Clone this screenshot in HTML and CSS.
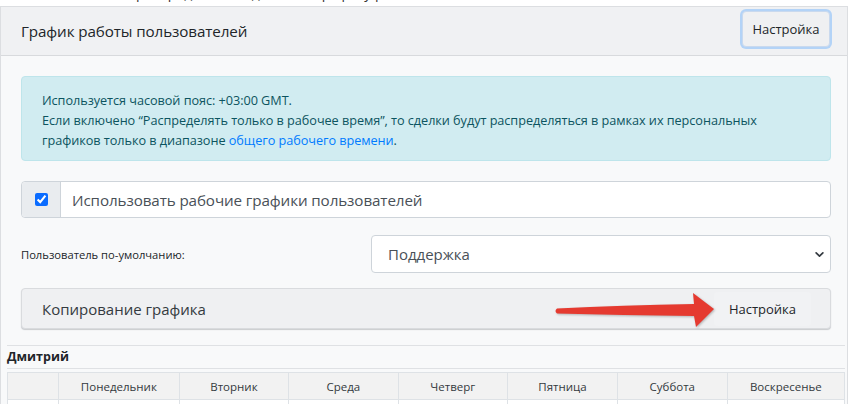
FILE: index.html
```html
<!DOCTYPE html>
<html lang="ru">
<head>
  <meta charset="UTF-8" />
  <meta name="viewport" content="width=device-width, initial-scale=1.0"/>
  <title>График работы пользователей</title>
  <link rel="stylesheet" href="styles.css">
</head>
<body>
  <div class="cut"><span>распределения сделок по графику работы</span></div>

  <div class="card">
    <div class="card-header">
      <span class="card-title">График работы пользователей</span>
      <button class="btn btn-focus">Настройка</button>
    </div>

    <div class="card-body">
      <div class="alert">
        Используется часовой пояс: +03:00 GMT.<br>
        Если включено “Распределять только в рабочее время”, то сделки будут распределяться в рамках их персональных
        графиков только в диапазоне <a href="#">общего рабочего времени</a>.
      </div>

      <div class="input-group">
        <div class="prepend">
          <input type="checkbox" checked>
        </div>
        <div class="group-text">Использовать рабочие графики пользователей</div>
      </div>

      <div class="form-row">
        <label class="row-label">Пользователь по-умолчанию:</label>
        <div class="select">
          <span>Поддержка</span>
          <svg class="chevron" width="9" height="9" viewBox="0 0 16 16">
            <path d="M2 5l6 6 6-6" fill="none" stroke="#343a40" stroke-width="3" stroke-linecap="round" stroke-linejoin="round"/>
          </svg>
        </div>
      </div>

      <div class="copy-card">
        <span class="copy-title">Копирование графика</span>
        <button class="btn btn-plain">Настройка</button>
        <svg class="arrow" width="170" height="42" viewBox="0 0 170 42">
          <path d="M5 20.5 Q70 17 142 16 L141 5 L162 21 L144 39 L142 28 Q70 27 5 25.5 Q2 23 5 20.5 Z" fill="#e53a30"/>
        </svg>
      </div>
    </div>

    <div class="schedule">
      <div class="user-name">Дмитрий</div>
      <table class="week">
        <tr>
          <th class="c0"></th>
          <th class="c1">Понедельник</th>
          <th>Вторник</th>
          <th>Среда</th>
          <th>Четверг</th>
          <th>Пятница</th>
          <th>Суббота</th>
          <th class="c7">Воскресенье</th>
        </tr>
        <tr>
          <td></td><td></td><td></td><td></td><td></td><td></td><td></td><td></td>
        </tr>
      </table>
    </div>
  </div>
</body>
</html>
```

FILE: styles.css
```css
body {
  margin: 0;
  background: white;
  font-family: "Open Sans", "Noto Sans", sans-serif;
  color: #212529;
  overflow: hidden;
}

.cut {
  height: 6px;
  overflow: hidden;
  padding-left: 136px;
}

.cut span {
  display: block;
  margin-top: -15px;
  font-size: 14px;
  line-height: 16px;
  color: #333;
}

.card {
  margin-right: 5px;
  border: 1px solid #dcdee1;
  background: #f8f9fa;
}

.card-header {
  height: 48px;
  display: flex;
  align-items: center;
  justify-content: space-between;
  padding: 0 17px 0 20px;
  background: #f0f1f3;
  border-bottom: 1px solid #d8dadd;
}

.card-title {
  font-size: 15.2px;
  color: #212529;
  letter-spacing: -0.1px;
}

.btn {
  font-family: inherit;
  font-size: 13px;
  color: #212529;
  cursor: pointer;
}

.btn-focus {
  width: 88px;
  height: 36px;
  background: #eff0f2;
  border: 1px solid #c9d9ee;
  border-radius: 4px;
  box-shadow: 0 0 0 2px #b3d3f7;
  margin-top: -5px;
  padding: 0;
}

.card-body {
  padding: 20px 16px 16px 20px;
}

.alert {
  background: #d1ecf1;
  border: 1px solid #bee5eb;
  border-radius: 4px;
  color: #0c5460;
  font-size: 12.7px;
  line-height: 20px;
  padding: 13px 20px 10px 20px;
  height: 60px;
  letter-spacing: -0.05px;
}

.alert a {
  color: #007bff;
  text-decoration: none;
}

.input-group {
  margin-top: 20px;
  height: 37px;
  display: flex;
  border: 1px solid #ced4da;
  border-radius: 4px;
  background: white;
  box-sizing: border-box;
}

.prepend {
  width: 38px;
  display: flex;
  align-items: center;
  justify-content: center;
  background: #e9ecef;
  border-right: 1px solid #ced4da;
  border-radius: 4px 0 0 4px;
}

.prepend input {
  margin: 0;
  width: 13px;
  height: 13px;
  accent-color: #0a6cff;
}

.group-text {
  display: flex;
  align-items: center;
  padding-left: 11px;
  font-size: 15.2px;
  color: #495057;
  letter-spacing: -0.1px;
}

.form-row {
  margin-top: 17px;
  display: flex;
  align-items: center;
}

.row-label {
  width: 350px;
  font-size: 11.2px;
  color: #212529;
}

.select {
  flex: 1;
  height: 38px;
  box-sizing: border-box;
  border: 1px solid #ced4da;
  border-radius: 4px;
  background: white;
  display: flex;
  align-items: center;
  justify-content: space-between;
  padding: 0 6px 0 16px;
  font-size: 15px;
  color: #495057;
}

.copy-card {
  position: relative;
  margin-top: 15px;
  height: 41px;
  box-sizing: border-box;
  border: 1px solid #d9dbde;
  border-radius: 4px;
  background: #eff0f2;
  box-shadow: 0 1px 1px #c9cbce;
  display: flex;
  align-items: center;
  justify-content: space-between;
  padding: 0 19px 0 20px;
}

.copy-title {
  font-size: 15px;
  color: #343a40;
}

.btn-plain {
  width: 97px;
  height: 34px;
  border: none;
  border-radius: 4px;
  background: #f1f2f4;
  padding: 0;
}

.arrow {
  position: absolute;
  left: 530px;
  top: -1px;
  filter: drop-shadow(1px 1px 1px rgba(0, 0, 0, 0.25));
}

.schedule {
  border-top: 1px solid #dfe1e4;
  margin-left: 6px;
  margin-right: 2px;
}

.user-name {
  height: 22px;
  line-height: 22px;
  font-size: 12.5px;
  font-weight: bold;
  color: #212529;
  border-bottom: 1px solid #dfe1e4;
}

.week {
  margin-top: 3px;
  width: 838px;
  border-collapse: collapse;
  background: white;
  font-size: 11.5px;
}

.week th {
  height: 24px;
  background: #f2f2f2;
  border: 1px solid #dee2e6;
  font-weight: normal;
  color: #343a40;
  width: 109px;
}

.week th.c0 { width: 50px; }
.week th.c1 { width: 119px; }
.week th.c7 { width: 116px; }

.week td {
  height: 24px;
  border: 1px solid #dee2e6;
}
```
